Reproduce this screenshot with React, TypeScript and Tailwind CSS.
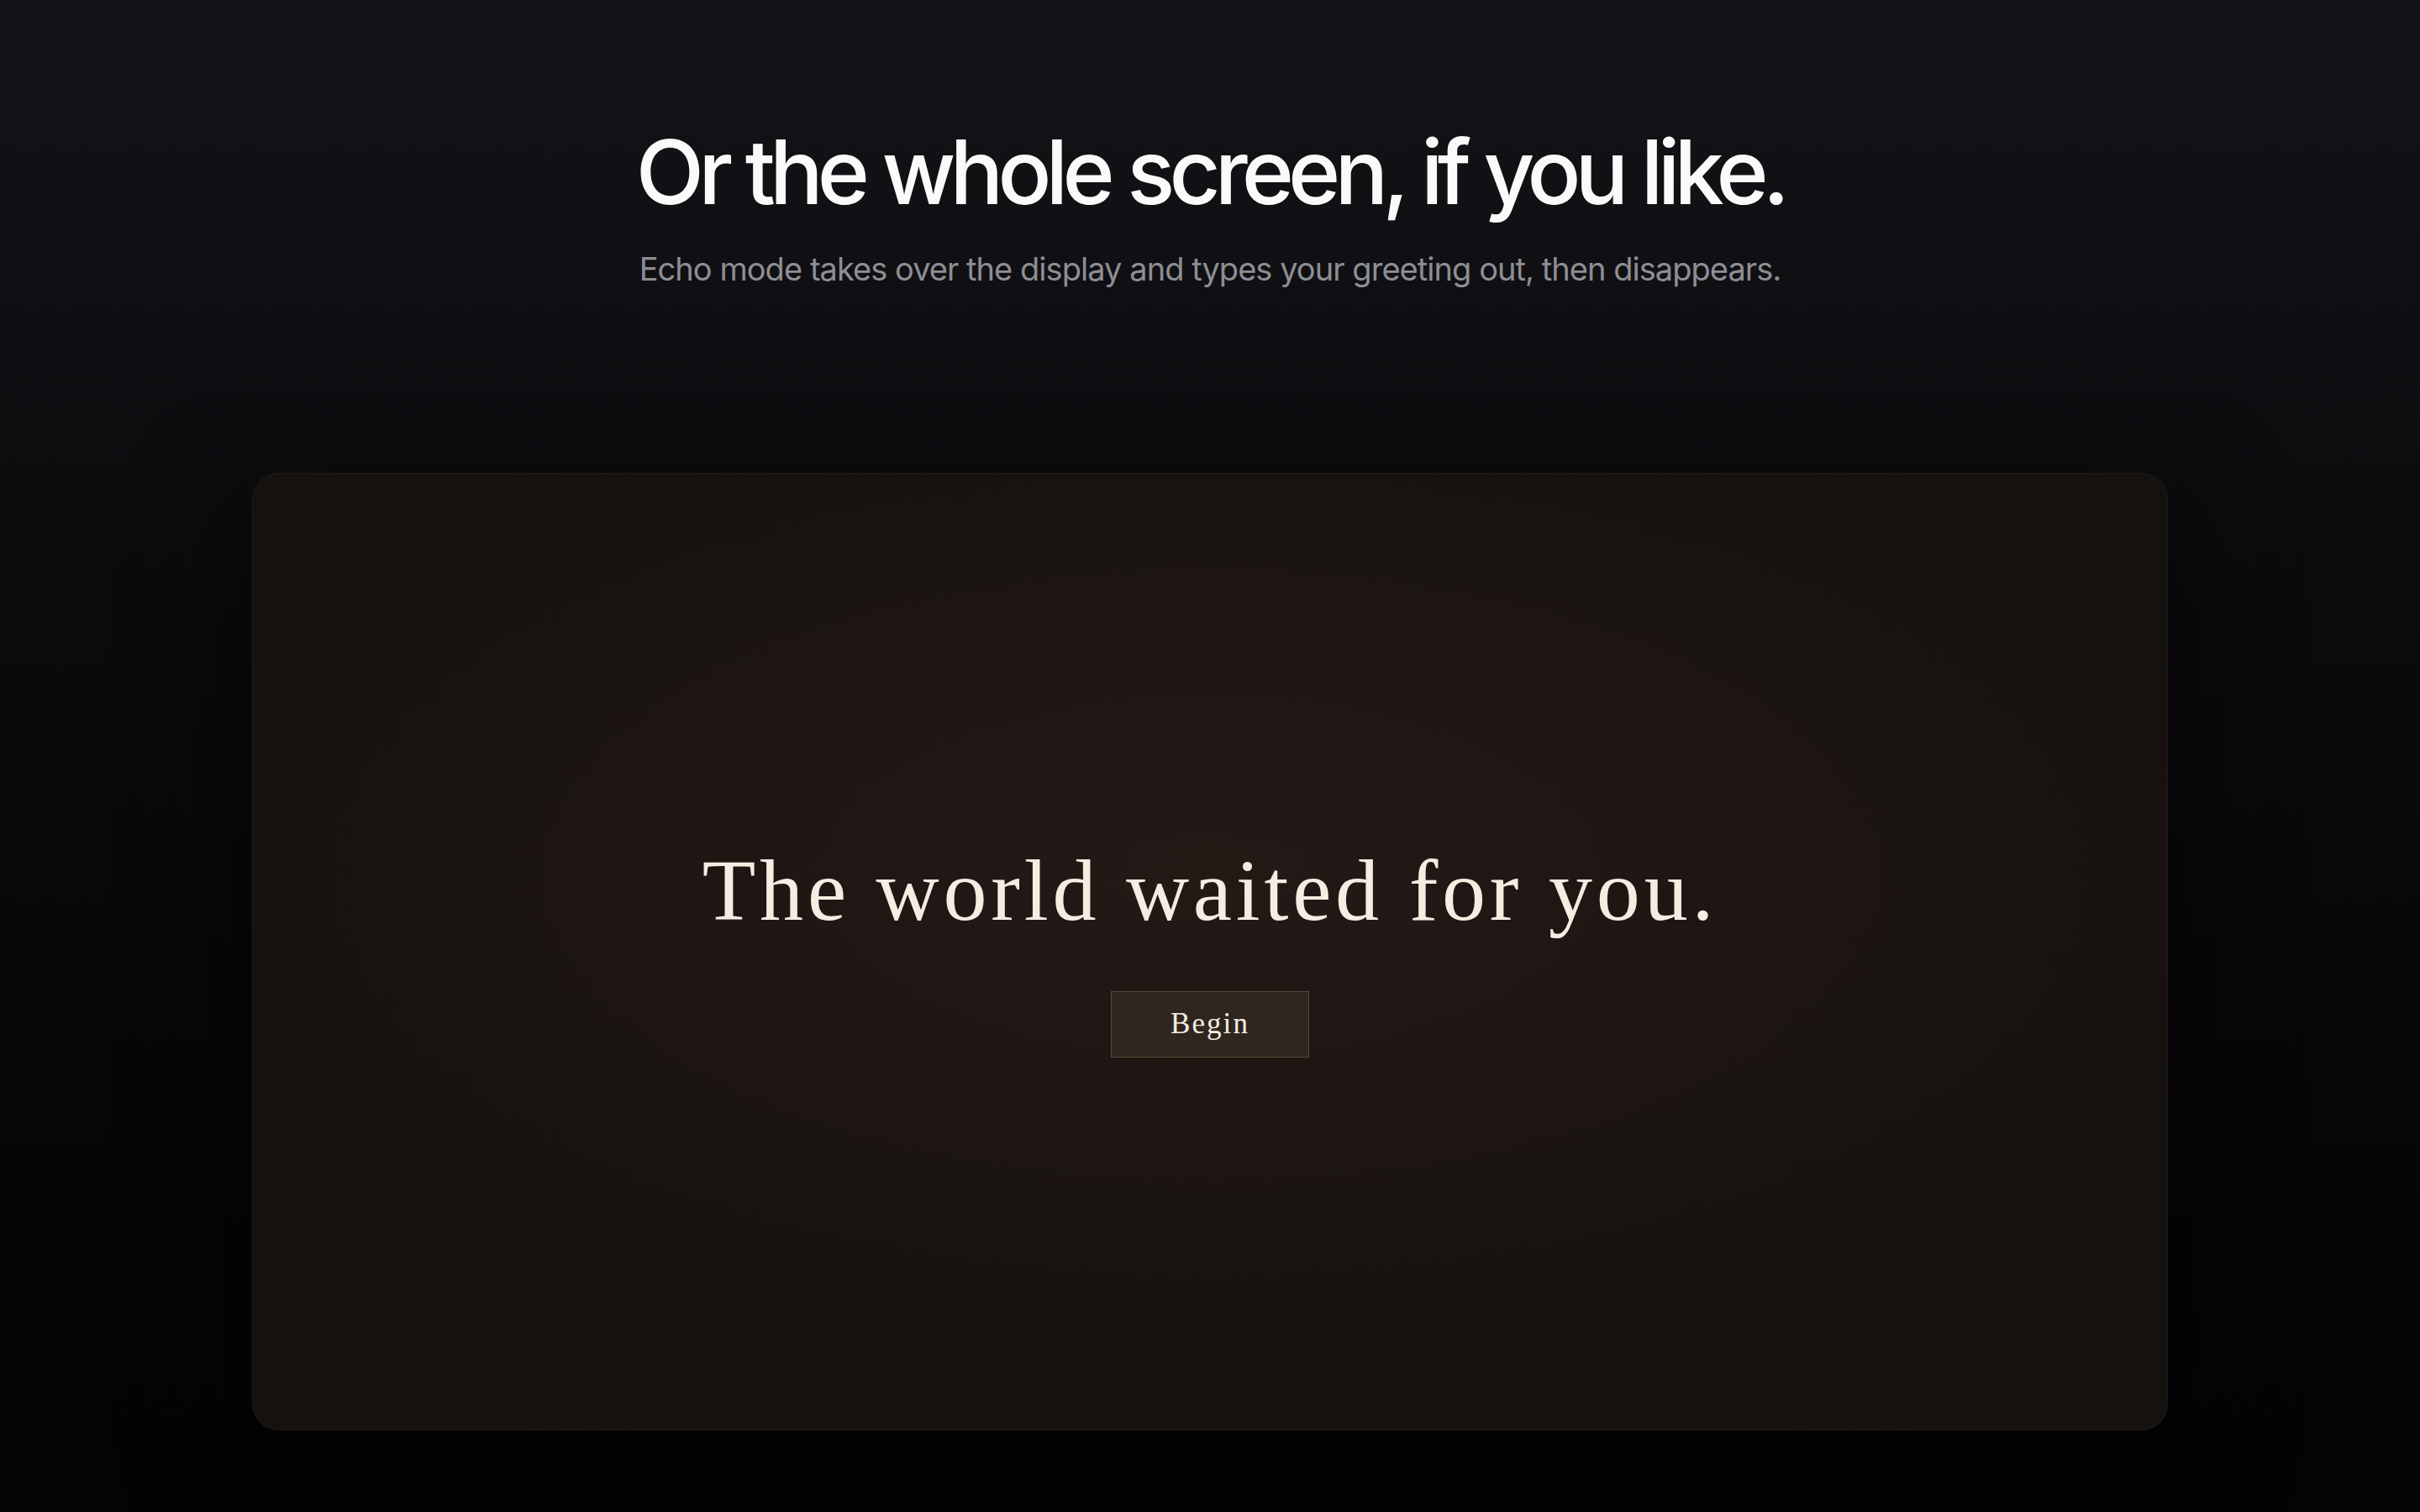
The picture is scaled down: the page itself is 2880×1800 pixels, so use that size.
export default function App() {
  return (
    <div className="min-h-screen w-full flex flex-col items-center bg-[linear-gradient(180deg,#141418_0%,#0c0c0f_35%,#060608_75%,#040406_100%)] font-['Inter','Noto_Sans',sans-serif]">
      <h1 className="pt-[152px] text-[106px] leading-none font-medium tracking-[-0.065em] text-[#fafafa]">
        Or the whole screen, if you like.
      </h1>
      <p className="mt-[38px] text-[38px] leading-[48px] tracking-[-0.025em] text-[#8e8e93]">
        Echo mode takes over the display and types your greeting out, then disappears.
      </p>
      <div className="mt-[219px] mb-[97px] w-[2280px] h-[1140px] rounded-[32px] border border-white/[0.04] shadow-[0_40px_140px_rgba(0,0,0,0.65)] bg-[radial-gradient(ellipse_60%_55%_at_50%_42%,#231a16_0%,#1c1512_55%,#15110e_100%)] flex flex-col items-center justify-center">
        <h2 className="font-['Liberation_Serif','DejaVu_Serif',serif] text-[104px] leading-none tracking-[0.046em] text-[#f5ece2]">
          The world waited for you.
        </h2>
        <button className="mt-[68px] w-[236px] h-[79px] bg-[#2f261f] border border-[#5a4a3b] font-['Liberation_Serif','DejaVu_Serif',serif] text-[35px] tracking-[0.06em] text-[#f5ece2] flex items-center justify-center">
          Begin
        </button>
      </div>
    </div>
  );
}
